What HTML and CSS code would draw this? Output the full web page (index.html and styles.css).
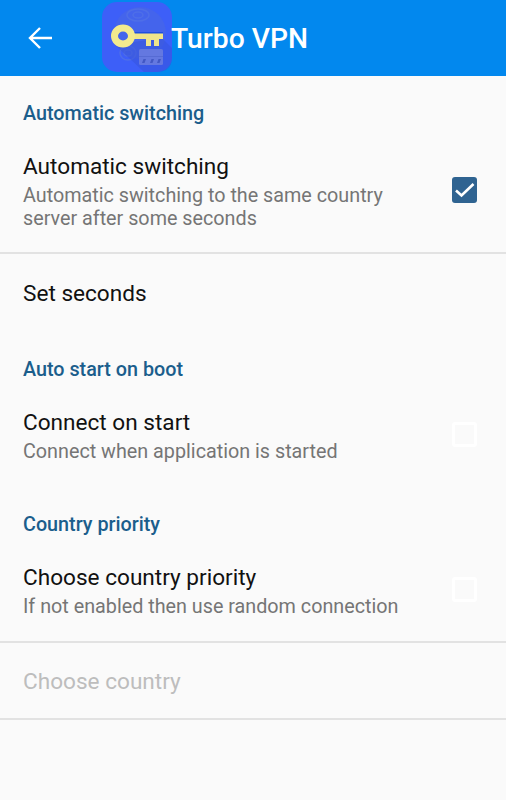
FILE: index.html
```html
<!DOCTYPE html>
<html>
<head>
  <meta charset="UTF-8">
  <meta name="viewport" content="width=device-width, initial-scale=1.0"/>
  <title>Turbo VPN</title>
  <link rel="stylesheet" href="styles.css">
</head>
<body>
  <div class="toolbar">
    <svg class="back" width="26" height="24" viewBox="0 0 26 24">
      <path d="M25 12H3M13 2L3 12l10 10" fill="none" stroke="#fff" stroke-width="2.4"/>
    </svg>
    <svg class="logo" width="70" height="70" viewBox="0 0 70 70">
      <rect width="70" height="70" rx="15" fill="#3d5ff8"/>
      <circle cx="38" cy="31" r="26" fill="#4464ec"/>
      <g fill="none" stroke="#4e6ee8" stroke-width="1.500">
        <ellipse cx="36" cy="13" rx="11" ry="6"/>
        <ellipse cx="36" cy="13" rx="5" ry="3"/>
        <ellipse cx="26" cy="51" rx="8" ry="7"/>
        <ellipse cx="26" cy="51" rx="4" ry="3"/>
      </g>
      <path d="M12 42L32 40 60 36 70 46V55Q70 70 55 70H42Z" fill="#3552d6" opacity=".45"/>
      <rect x="37" y="47" width="24" height="16" rx="1.500" fill="#6478e0"/>
      <rect x="37" y="54" width="24" height="1" fill="#566bd4"/>
      <path d="M40 61l1.500-4h2.500l-1.500 4zM48 61l1.500-4h2.500l-1.500 4zM55 61l1.500-4h2.500l-1.500 4z" fill="#4258c4"/>
      <path d="M30 30H61V37H57V44H52V38H49V44H44V37H30Z" fill="#f0e58a"/>
      <rect x="32" y="30" width="29" height="1.500" fill="#1f4fe0"/>
      <ellipse cx="21" cy="34" rx="8.500" ry="8" fill="none" stroke="#f3ea8e" stroke-width="7"/>
    </svg>
    <div class="toolbar-title">Turbo VPN</div>
  </div>

  <div class="settings">
    <div class="category">Automatic switching</div>
    <div class="pref pref-top">
      <div class="pref-text">
        <div class="pref-title">Automatic switching</div>
        <div class="pref-summary">Automatic switching to the same country server after some seconds</div>
      </div>
      <div class="check check-on">
        <svg width="25" height="26" viewBox="0 0 25 26">
          <path d="M4 13.500l5.500 5L21.500 7" fill="none" stroke="#fff" stroke-width="2.600"/>
        </svg>
      </div>
    </div>
    <div class="divider"></div>
    <div class="pref-single">Set seconds</div>

    <div class="category">Auto start on boot</div>
    <div class="pref">
      <div class="pref-text">
        <div class="pref-title">Connect on start</div>
        <div class="pref-summary">Connect when application is started</div>
      </div>
      <div class="check"></div>
    </div>

    <div class="category">Country priority</div>
    <div class="pref pref-last">
      <div class="pref-text">
        <div class="pref-title">Choose country priority</div>
        <div class="pref-summary">If not enabled then use random connection</div>
      </div>
      <div class="check"></div>
    </div>
    <div class="divider"></div>
    <div class="pref-single pref-disabled">Choose country</div>
    <div class="divider"></div>
  </div>
</body>
</html>
```

FILE: styles.css
```css
html, body {
  margin: 0;
  height: 100%;
}
body {
  background-color: #fafafa;
  font-family: Roboto, "Liberation Sans", sans-serif;
  overflow: hidden;
}
.toolbar {
  height: 76px;
  background-color: #0288ee;
  display: flex;
  align-items: center;
  box-sizing: border-box;
  padding-left: 27px;
}
.back {
  flex-shrink: 0;
}
.logo {
  flex-shrink: 0;
  margin-left: 49px;
  margin-top: -2px;
}
.toolbar-title {
  color: #fff;
  font-size: 28.25px;
  font-weight: 500;
  margin-left: -1px;
}
.category {
  color: #1b5e8c;
  font-size: 19.75px;
  font-weight: 500;
  line-height: 24px;
  padding: 26px 23px 0;
}
.pref {
  display: flex;
  align-items: center;
  padding: 27px 29px 24px 23px;
}
.pref-top {
  padding-bottom: 22px;
}
.pref-last {
  padding-bottom: 23px;
}
.pref-text {
  flex-grow: 1;
  max-width: 385px;
}
.pref-title {
  color: #111;
  font-size: 22.6px;
  line-height: 28px;
}
.pref-summary {
  color: #757575;
  font-size: 19.75px;
  line-height: 23px;
  margin-top: 3px;
}
.check {
  width: 25px;
  height: 25px;
  box-sizing: border-box;
  border: 3px solid #fff;
  border-radius: 3px;
  margin-left: auto;
  margin-bottom: 3px;
  flex-shrink: 0;
}
.check-on {
  height: 26px;
  background-color: #2f6391;
  border: 0;
}
.check-on svg {
  display: block;
}
.divider {
  height: 2px;
  background-color: #e2e2e2;
}
.pref-single {
  color: #111;
  font-size: 22.6px;
  line-height: 28px;
  padding: 26px 23px 24px;
}
.pref-disabled {
  color: #bdbdbd;
  padding: 25px 23px 22px;
}
```
